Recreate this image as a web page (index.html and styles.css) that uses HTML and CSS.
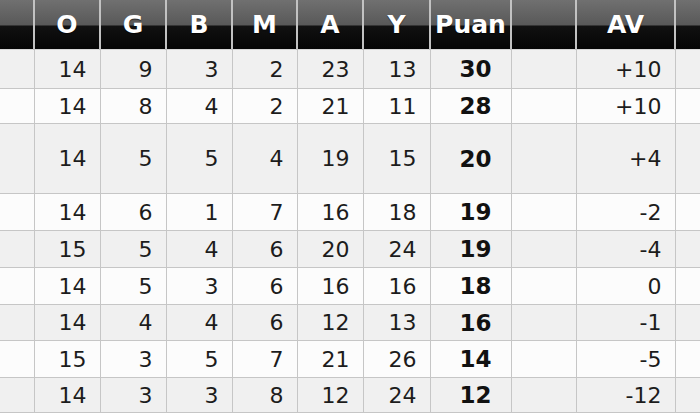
FILE: index.html
```html
<!DOCTYPE html>
<html lang="tr">
<head>
<meta charset="utf-8">
<title>Puan Durumu</title>
<link rel="stylesheet" href="styles.css">
</head>
<body>
<table class="standings">
  <colgroup>
    <col class="c-team"><col class="c-n"><col class="c-n"><col class="c-n"><col class="c-m"><col class="c-n"><col class="c-y"><col class="c-puan"><col class="c-gap"><col class="c-av"><col class="c-end">
  </colgroup>
  <thead>
    <tr>
      <th></th><th>O</th><th>G</th><th>B</th><th>M</th><th>A</th><th>Y</th><th>Puan</th><th></th><th>AV</th><th></th>
    </tr>
  </thead>
  <tbody>
    <tr><td></td><td>14</td><td>9</td><td>3</td><td>2</td><td>23</td><td>13</td><td class="pts">30</td><td></td><td>+10</td><td></td></tr>
    <tr><td></td><td>14</td><td>8</td><td>4</td><td>2</td><td>21</td><td>11</td><td class="pts">28</td><td></td><td>+10</td><td></td></tr>
    <tr><td></td><td>14</td><td>5</td><td>5</td><td>4</td><td>19</td><td>15</td><td class="pts">20</td><td></td><td>+4</td><td></td></tr>
    <tr><td></td><td>14</td><td>6</td><td>1</td><td>7</td><td>16</td><td>18</td><td class="pts">19</td><td></td><td>-2</td><td></td></tr>
    <tr><td></td><td>15</td><td>5</td><td>4</td><td>6</td><td>20</td><td>24</td><td class="pts">19</td><td></td><td>-4</td><td></td></tr>
    <tr><td></td><td>14</td><td>5</td><td>3</td><td>6</td><td>16</td><td>16</td><td class="pts">18</td><td></td><td>0</td><td></td></tr>
    <tr><td></td><td>14</td><td>4</td><td>4</td><td>6</td><td>12</td><td>13</td><td class="pts">16</td><td></td><td>-1</td><td></td></tr>
    <tr><td></td><td>15</td><td>3</td><td>5</td><td>7</td><td>21</td><td>26</td><td class="pts">14</td><td></td><td>-5</td><td></td></tr>
    <tr><td></td><td>14</td><td>3</td><td>3</td><td>8</td><td>12</td><td>24</td><td class="pts">12</td><td></td><td>-12</td><td></td></tr>
  </tbody>
</table>
</body>
</html>
```

FILE: styles.css
```css
html, body {
  margin: 0;
  padding: 0;
  background: #ffffff;
}

.standings {
  width: 700px;
  table-layout: fixed;
  border-collapse: collapse;
  font-family: "DejaVu Sans", Verdana, sans-serif;
  color: #1c1c1c;
}

.c-team { width: 34px; }
.c-n { width: 66px; }
.c-m { width: 65px; }
.c-y { width: 67px; }
.c-puan { width: 81px; }
.c-gap { width: 65px; }
.c-av { width: 99px; }
.c-end { width: 25px; }

.standings th {
  height: 49px;
  padding: 0;
  font-size: 25px;
  font-weight: bold;
  color: #ffffff;
  text-align: center;
  background: linear-gradient(to bottom, #707070 0%, #595959 50%, #111111 54%, #050505 100%);
  border-left: 2px solid #c2c2c2;
  border-right: 2px solid #c2c2c2;
  border-bottom: 1px solid #d8d8d8;
  white-space: nowrap;
  overflow: hidden;
  text-shadow: 0 1px 1px rgba(0, 0, 0, 0.6);
}

.standings th:first-child { border-left: none; }
.standings th:last-child { border-right: none; }

.standings td {
  height: 36px;
  padding: 0 13px 0 0;
  font-size: 22px;
  text-align: right;
  vertical-align: middle;
  border: 1px solid #c6c6c6;
  background: #fcfcfc;
}

.standings td:first-child { border-left: none; }
.standings td:last-child { border-right: none; }

.standings tbody tr:nth-child(odd) td { background: #f0f0f0; }

.standings tbody tr:nth-child(1) td { height: 38px; }
.standings tbody tr:nth-child(2) td { height: 34px; }
.standings tbody tr:nth-child(3) td { height: 69px; }
.standings tbody tr:nth-child(7) td { height: 35px; }
.standings tbody tr:nth-child(9) td { height: 34px; }

.standings td.pts {
  text-align: center;
  padding: 0 0 0 10px;
  font-weight: bold;
  font-size: 23px;
  color: #111111;
}
```
